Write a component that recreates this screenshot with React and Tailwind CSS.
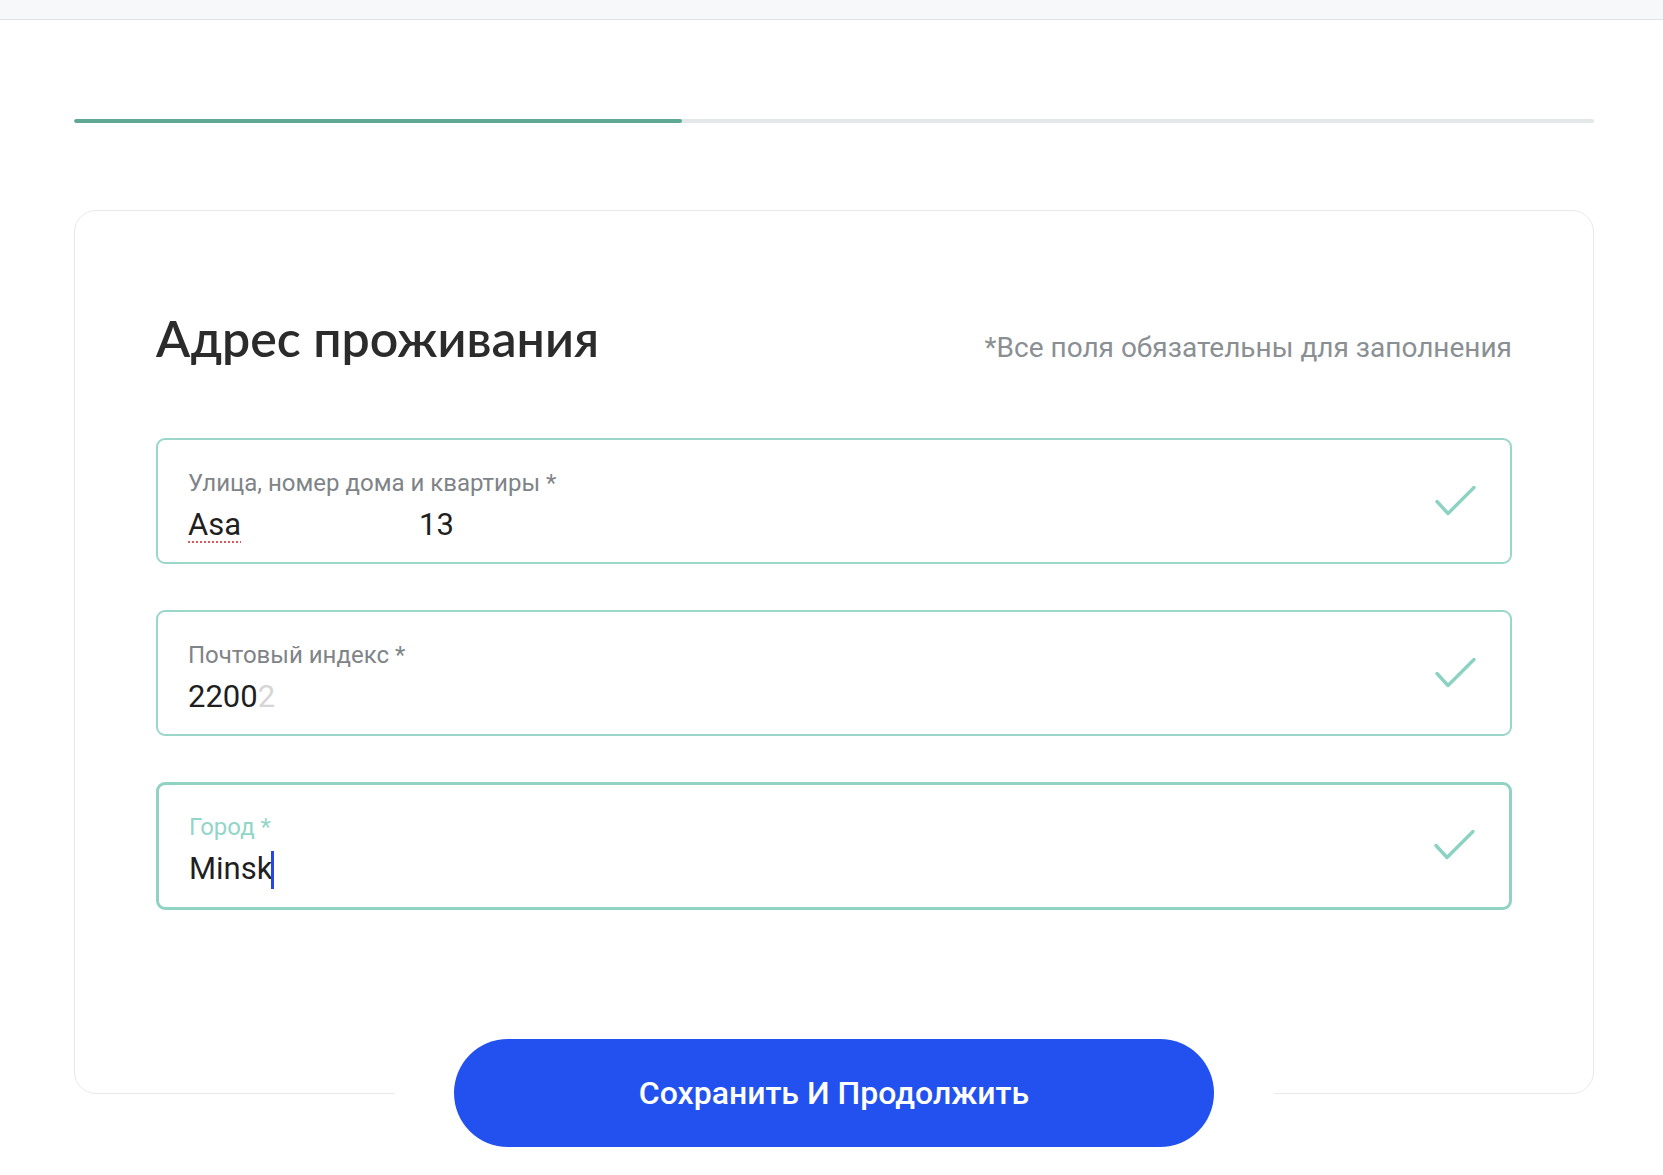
import React from 'react';

const roboto = { fontFamily: 'Roboto, "Liberation Sans", sans-serif' };

function Check() {
    return (
        <svg width="44" height="34" viewBox="0 0 44 34" fill="none" className="-mt-[11px] shrink-0">
            <path d="M4 17.5 L15 29.5 L41 3.5" stroke="#8cd2c2" strokeWidth="3.4" strokeLinecap="round" strokeLinejoin="round" />
        </svg>
    );
}

function Field({ label, focused, children }) {
    return (
        <div
            className={`flex items-center justify-between rounded-[9px] bg-white pl-[30px] pr-[33px] ${
                focused ? 'border-[3px] border-[#90d3c4] pt-[29px] pb-[20px]' : 'border-2 border-[#9ad6c9] pt-[30px] pb-[19px]'
            }`}
        >
            <div className="flex flex-col">
                <span
                    className={`text-[24px] leading-[26px] ${focused ? 'text-[#93d6c7]' : 'text-[#7f8488]'}`}
                    style={roboto}
                >
                    {label}
                </span>
                <div className="mt-[11px] h-[36px] text-[31px] leading-[36px] text-[#1f1f1f]" style={roboto}>
                    {children}
                </div>
            </div>
            <Check />
        </div>
    );
}

export default function App() {
    return (
        <div className="min-h-screen bg-white">
            {/* browser strip */}
            <div className="h-[20px] border-b border-[#e2e3e5] bg-[#f7f8fa]" />

            <div className="ml-[74px] mr-[69px]">
                {/* progress */}
                <div className="mt-[99px] flex h-[4px] overflow-hidden rounded-full bg-[#e4e7e7]">
                    <div className="h-full w-[608px] rounded-full bg-[#5fa893]" />
                </div>

                {/* card */}
                <div className="mt-[87px] rounded-[22px] border border-[#e9e9ea] px-[81px] pt-[97px] pb-[183px]">
                    <div className="mb-[70px] flex items-baseline justify-between">
                        <h1
                            className="text-[50px] font-semibold leading-[60px] text-[#2b2b2b]"
                            style={{ fontFamily: 'Lato, "Noto Sans", sans-serif' }}
                        >
                            Адрес проживания
                        </h1>
                        <span className="text-[28px] leading-[30px] text-[#8a8f93]" style={roboto}>
                            *Все поля обязательны для заполнения
                        </span>
                    </div>

                    <div className="flex flex-col gap-[46px]">
                        <Field label="Улица, номер дома и квартиры *">
                            <span className="underline decoration-[#e0565b] decoration-dotted decoration-2 underline-offset-[6px]">Asa</span>
                            <span className="inline-block w-[178px]" />
                            <span>13</span>
                        </Field>
                        <Field label="Почтовый индекс *">
                            2200<span className="text-[#d6d6d6]">2</span>
                        </Field>
                        <Field label="Город *" focused>
                            Minsk<span className="-ml-[1px] inline-block h-[38px] w-[3px] align-top bg-[#2747e2]" />
                        </Field>
                    </div>
                </div>

                {/* button sits over the card's bottom edge */}
                <div className="relative -mt-[55px] flex justify-center">
                    <div className="bg-white px-[60px]">
                        <button
                            className="h-[108px] w-[760px] rounded-full bg-[#2251f0] text-[32px] font-medium text-white"
                            style={roboto}
                        >
                            Сохранить И Продолжить
                        </button>
                    </div>
                </div>
            </div>
        </div>
    );
}
